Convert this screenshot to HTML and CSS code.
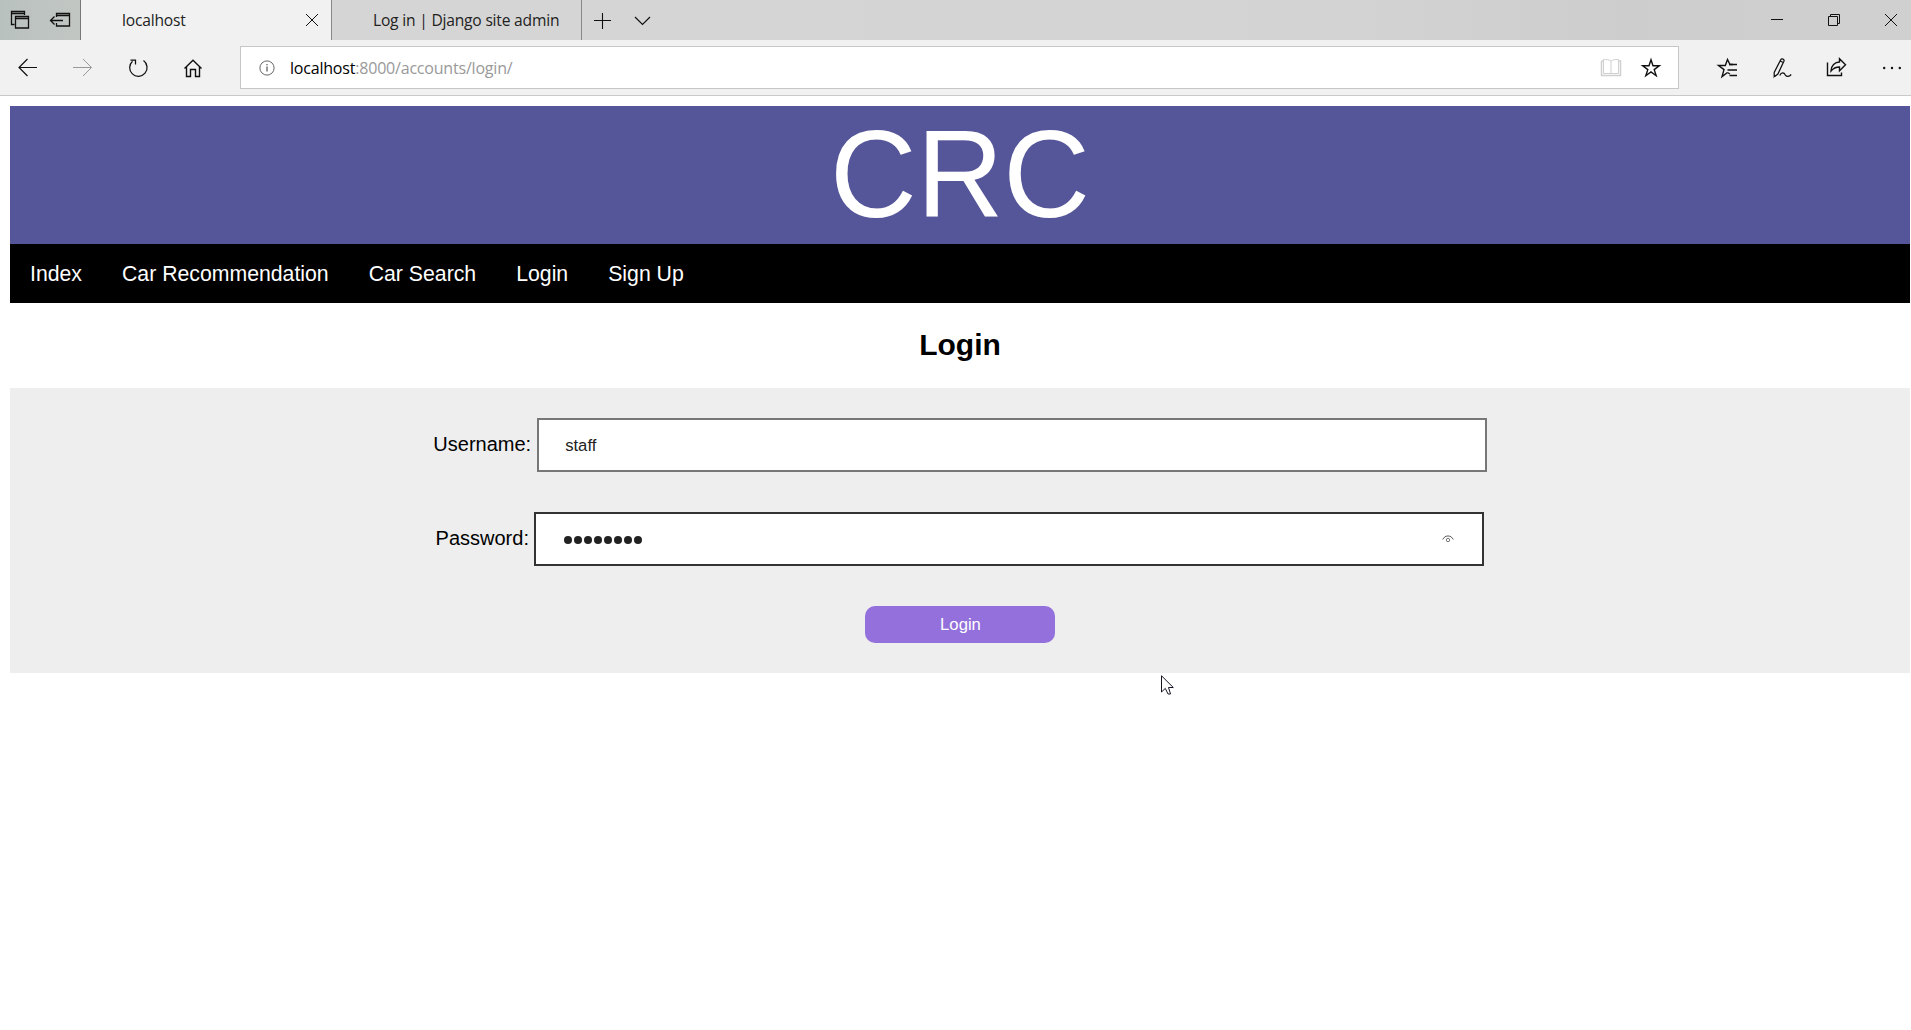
FILE: index.html
```html
<!DOCTYPE html>
<html lang="en">
<head>
<meta charset="utf-8">
<title>localhost</title>
<link rel="stylesheet" href="styles.css">
</head>
<body>
<div class="tabbar">
  <div class="tab-tools">
    <svg class="ic" width="81" height="40" viewBox="0 0 81 40"><path d="M14.500 24.500H11.500V11.500H24.500V15M11.500 13.500H24.500M15.500 16.500H28.500V28H15.500ZM15.500 18.500H28.500" stroke-width="1.300"/><path d="M56.500 17V13.500H69.500V26H56.500V23M56.500 15.500H69.500M63 20.500H51M54.500 16.500L50.500 20.500L54.500 24.500" stroke-width="1.300"/></svg>
  </div>
  <div class="tab active"><span>localhost</span>
    <svg class="ic" width="14" height="14" viewBox="0 0 14 14"><path d="M1 1L13 13M13 1L1 13"/></svg>
  </div>
  <div class="tab"><span>Log in | Django site admin</span></div>
  <div class="tab-actions">
    <svg class="ic" width="80" height="40" viewBox="0 0 80 40"><path d="M12 20.500H29M20.500 13V29" stroke-width="1.100"/><path d="M53 17L60.500 24.500L68 17" stroke-width="1.200"/></svg>
  </div>
  <svg class="ic window-actions" width="150" height="40" viewBox="0 0 150 40"><path d="M10 19.500H22" /><path d="M67.500 16.500H76.500V25.500H67.500ZM69.500 16V14.500H78.500V23.500H77"/><path d="M124 14L136 26M136 14L124 26"/></svg>
</div>
<div class="toolbar">
  <svg class="ic" width="240" height="55" viewBox="0 0 240 55"><path d="M37 27.500H19M27.500 19L19 27.500L27.500 36" stroke-width="1.200"/><path class="muted" d="M73 27.500H91.500M83 19L91.500 27.500L83 36"/><path d="M143.500 20.600A8.700 8.700 0 1 1 132.500 21.200M130.500 20H135.500V24.500" stroke-width="1.250"/><path d="M184.500 28.500L193 20.200L201.500 28.500M186.500 27V36.500H190.500V29.500H195.500V36.500H199.500V27" stroke-width="1.400"/></svg>
  <div class="address">
    <svg class="ic" width="16" height="16" viewBox="0 0 16 16"><circle cx="8" cy="8" r="7.100" stroke="#666"/><path d="M8 6.500V11.500M8 4V5.300" stroke="#333"/></svg>
    <span class="url">localhost<span>:8000/accounts/login/</span></span>
    <svg class="ic" width="78" height="42" viewBox="0 0 78 42"><g stroke="#cfcfcf"><path d="M1.500 14V28.500H20.500V14H19M1.500 14H3" stroke-width="1.500"/><path d="M11 14V27M11 14C9 12.500 6 12.500 3.500 12.500V26.500H18.500V12.500C16 12.500 13 12.500 11 14"/></g><path d="M51 12.800L53 18.800H59.300L54.200 22.600L56.200 28.700L51 24.900L45.800 28.700L47.800 22.600L42.700 18.800H49Z" stroke-width="1.400"/></svg>
  </div>
  <svg class="ic" width="232" height="55" viewBox="0 0 232 55"><path d="M54 24.500H51L48.500 19.500L46.300 25.500H39.500L45 29.600L43 36.600L48.500 32.500" stroke-width="1.400"/><path d="M50 24.500H58M48.500 30H58M50.500 35.500H58M48.500 32.500L51 34" stroke-width="1.300"/><path transform="translate(.7 0)" d="M95.500 35L94.500 36.500L94.500 32.500L101 19.800C102 18 105 19.300 104.200 21.200L98.200 34L95 36.500M100.500 21L103.500 22.500M100 35.500C102 31.500 104.500 33 105.500 34.800C107 37 109.500 37 111.500 34.500" stroke-width="1.250"/><path d="M148.500 22.500V35.500H162.500V32.500M152 31C152 25.500 156 22 160.500 22V18.800L166.500 24.800L160.500 30.800V27C156.500 27 154 28.500 152 31Z" stroke-width="1.400"/><g class="dots"><circle cx="205.200" cy="28" r="1.200"/><circle cx="213" cy="28" r="1.200"/><circle cx="220.800" cy="28" r="1.200"/></g></svg>
</div>
<main class="page">
  <header class="banner"><span class="brand">CRC</span></header>
  <nav class="nav"><a>Index</a><a>Car Recommendation</a><a>Car Search</a><a>Login</a><a>Sign Up</a></nav>
  <h2 class="title">Login</h2>
  <form class="form">
    <div class="row"><label>Username:</label><div class="field"><span class="value">staff</span></div></div>
    <div class="row password"><label>Password:</label><div class="field focused"><span class="mask"><i></i><i></i><i></i><i></i><i></i><i></i><i></i><i></i></span>
      <svg class="ic" width="12" height="8" viewBox="0 0 12 8"><path d="M.7 4.500C3-.2 9-.2 11.300 4.500" stroke="#555"/><circle cx="6" cy="5" r="1.700" stroke="#777"/></svg></div></div>
    <button class="submit" type="button">Login</button>
  </form>
</main>
<svg class="cursor" width="14" height="21" viewBox="0 0 14 21"><path d="M.5 .8V17L4.300 13.400L7 19H9.500L7.500 12.500H12.300Z" fill="#fff" stroke="#151525"/></svg>
</body>
</html>
```
FILE: styles.css
```css
* { box-sizing: border-box; }
body { margin: 0; height: 1030px; overflow: hidden; background: #fff; color: #000; font-family: "Liberation Sans", Arial, sans-serif; }
svg { display: block; flex: none; }
.ic { fill: none; stroke: #111; }
.ic .muted { stroke: #999; }
.dots { fill: #111; stroke: none; }
.tabbar { display: flex; height: 40px; background: linear-gradient(90deg, #d5d5d5 30%, #d3d3d3 70%, #cdcdcd 85%, #d0d0d0); font: 15.600px/34px "Open Sans", "Noto Sans", sans-serif; letter-spacing: -.2px; }
.tab-tools { width: 81px; background: linear-gradient(90deg, #b9c1be, #c1c6c3); border-right: 1px solid #777; }
.tab { display: flex; width: 250px; padding: 3px 0 3px 41px; border-right: 1px solid #888; color: #222; white-space: nowrap; }
.tab.active { width: 251px; justify-content: space-between; align-items: center; padding-right: 12px; background: #f1f1f1; }
.window-actions { margin-left: auto; }
.toolbar { display: flex; height: 56px; background: #f1f1f1; border-bottom: 1px solid #c9c9c9; }
.address { display: flex; flex: 1; align-items: center; height: 43px; margin-top: 6px; padding-left: 18px; background: #fff; border: 1px solid #c6c6c6; }
.url { flex: 1; margin-left: 15px; font: 16px/34px "Open Sans", "Noto Sans", sans-serif; letter-spacing: -.2px; }
.url span { color: #999; }
.page { margin: 10px 1px 0 10px; }
.banner { height: 138px; background: #555599; color: #fff; font-size: 120px; line-height: 138px; text-align: center; }
.brand { display: inline-block; transform: scaleY(1.040); transform-origin: 50% 111px; }
.nav { display: flex; height: 59px; background: #000; color: #fff; font-size: 21.250px; line-height: 60px; }
.nav a { padding: 0 20px; }
.title { height: 85px; margin: 0; font-size: 30px; line-height: 84px; text-align: center; }
.form { display: flex; flex-direction: column; align-items: center; gap: 40px; height: 285px; padding-top: 30px; background: #eee; font-size: 20px; }
.row { display: flex; gap: 5.500px; width: 1054px; height: 54px; line-height: 52px; justify-content: center; }
.field { display: flex; align-items: center; justify-content: space-between; width: 950px; padding: 0 28px 0 26.500px; border: 2px solid #777; background: #fff; color: #222; font-size: 16.670px; }
.value { padding-top: 1px; }
.focused { padding-left: 28px; border-color: #333; }
.mask { display: flex; gap: 2px; padding-top: 1px; }
.mask i { width: 8px; height: 8px; border-radius: 50%; background: #222; }
.submit { width: 190px; height: 37px; padding: 0 0 0 1px; border: 0; border-radius: 10px; background: mediumpurple; color: #fff; font: 16.670px/37px "Liberation Sans", Arial, sans-serif; }
.cursor { position: absolute; left: 1161px; top: 675px; }
```
